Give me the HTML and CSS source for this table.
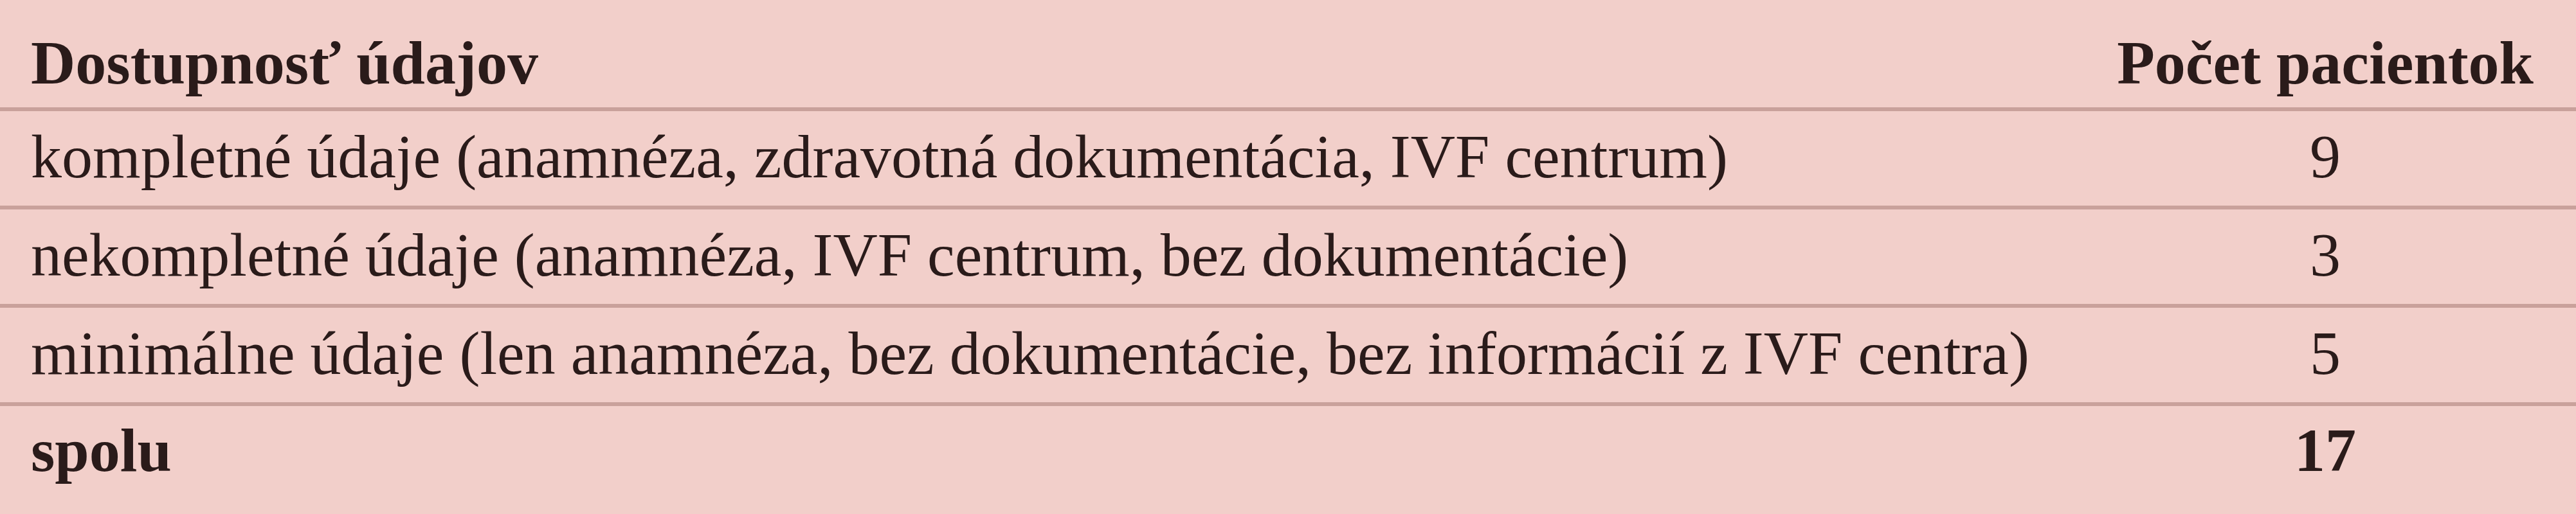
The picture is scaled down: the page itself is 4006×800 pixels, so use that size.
FILE: index.html
```html
<!DOCTYPE html>
<html lang="sk">
<head>
<meta charset="utf-8">
<title>Dostupnosť údajov</title>
<link rel="stylesheet" href="styles.css">
</head>
<body>
<table class="data">
  <thead>
    <tr class="head-row">
      <th class="col-label">Dostupnosť údajov</th>
      <th class="col-count">Počet pacientok</th>
    </tr>
  </thead>
  <tbody>
    <tr class="body-row">
      <td class="col-label">kompletné údaje (anamnéza, zdravotná dokumentácia, IVF centrum)</td>
      <td class="col-count">9</td>
    </tr>
    <tr class="body-row">
      <td class="col-label">nekompletné údaje (anamnéza, IVF centrum, bez dokumentácie)</td>
      <td class="col-count">3</td>
    </tr>
    <tr class="body-row">
      <td class="col-label">minimálne údaje (len anamnéza, bez dokumentácie, bez informácií z IVF centra)</td>
      <td class="col-count">5</td>
    </tr>
    <tr class="total-row">
      <td class="col-label">spolu</td>
      <td class="col-count">17</td>
    </tr>
  </tbody>
</table>
</body>
</html>
```
FILE: styles.css
```css
html, body {
  margin: 0;
  padding: 0;
  background: #f2cfca;
}

body {
  width: 4006px;
  height: 800px;
  overflow: hidden;
  font-family: "Liberation Serif", "Times New Roman", serif;
  color: #2a1b1a;
}

.data {
  width: 100%;
  border-collapse: separate;
  border-spacing: 0;
  font-size: 96px;
  line-height: 96px;
}

.data th,
.data td {
  padding: 0;
  vertical-align: top;
  white-space: nowrap;
  box-sizing: border-box;
}

.data .col-label {
  text-align: left;
  padding-left: 48px;
}

.data .col-count {
  width: 1%;
  text-align: center;
  padding-right: 66px;
}

.head-row th {
  font-weight: 700;
  height: 173px;
  padding-top: 50px;
  border-bottom: 6px solid #c9a19b;
}

.body-row td {
  font-weight: 400;
  height: 153px;
  padding-top: 23px;
  border-bottom: 6px solid #c9a19b;
}

.total-row td {
  font-weight: 700;
  height: 168px;
  padding-top: 21px;
}
```
